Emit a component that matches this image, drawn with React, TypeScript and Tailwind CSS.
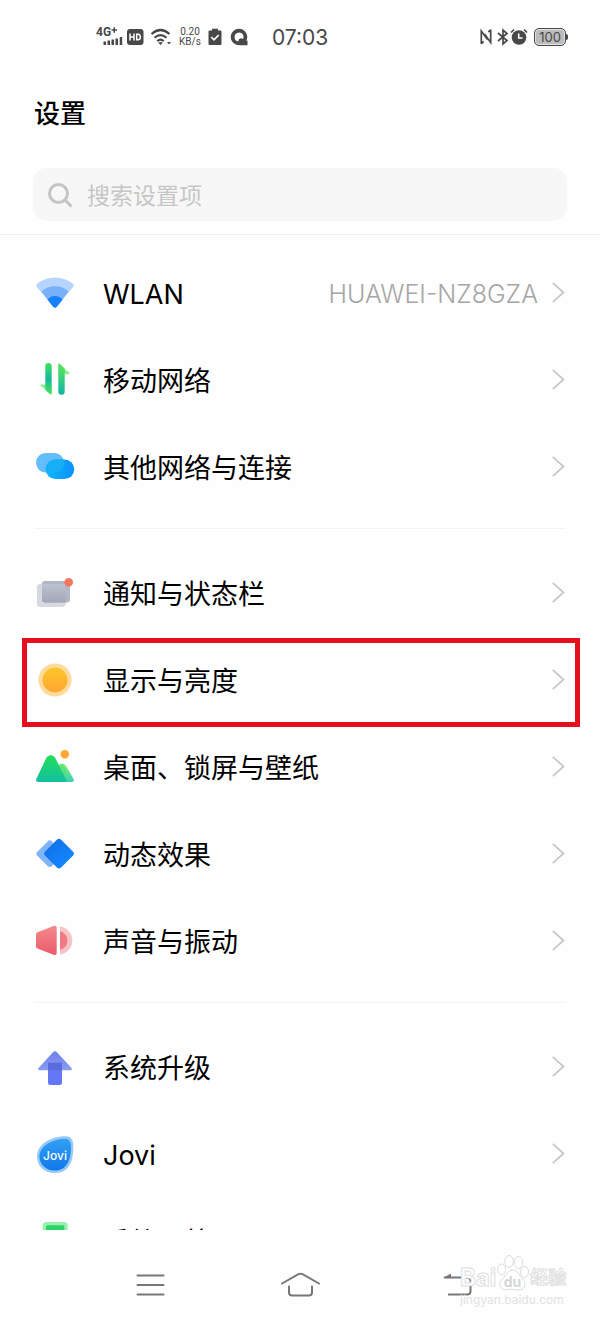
import React, { useState } from 'react';

const WlanIcon = () => (
  <svg viewBox="0 0 42 42" className="h-[42px] w-[42px] shrink-0" aria-hidden="true">
    <path d="M2.4 14.2Q1.6 13 2.8 12Q10.5 5.5 21 5.5Q31.5 5.5 39.2 12Q40.4 13 39.6 14.2L23 34.6Q21 36.8 19 34.6Z" fill="#b5d5fd" />
    <path d="M7.5 19.4Q13 14.2 21 14.2Q29 14.2 34.5 19.4L23 34.6Q21 36.8 19 34.6Z" fill="#79b0fa" />
    <path d="M13.4 27.4Q16.5 24 21 24Q25.5 24 28.6 27.4L23 34.6Q21 36.8 19 34.6Z" fill="#1780fb" />
  </svg>
);

const MobileIcon = () => (
  <svg viewBox="0 0 42 42" className="h-[42px] w-[42px] shrink-0" aria-hidden="true">
    <defs>
      <linearGradient id="mobile-down" x1="0" y1="0" x2="0" y2="1">
        <stop offset="0" stopColor="#3fe35c" />
        <stop offset=".5" stopColor="#14b8a0" />
        <stop offset="1" stopColor="#4be457" />
      </linearGradient>
      <linearGradient id="mobile-up" x1="0" y1="0" x2="0" y2="1">
        <stop offset="0" stopColor="#5be854" />
        <stop offset="1" stopColor="#12b3a6" />
      </linearGradient>
    </defs>
    <path d="M6.500 27Q5.600 25.400 7.500 25.400H17.700V35Z" fill="#8ff08c" />
    <path d="M11.300 7.200a3.200 3.200 0 0 1 6.400 0V34.500Q17.700 36.300 16.200 35.200L11.300 31Z" fill="url(#mobile-down)" />
    <path d="M35.500 13.500Q36.400 15.200 34.500 15.200H24.300V5.500Z" fill="#8ff08c" />
    <path d="M30.700 32.600a3.200 3.200 0 0 1-6.400 0V5.500Q24.300 3.700 25.800 4.800L30.700 9.500Z" fill="url(#mobile-up)" />
  </svg>
);

const ConnectionIcon = () => (
  <svg viewBox="0 0 42 42" className="h-[42px] w-[42px] shrink-0" aria-hidden="true">
    <defs>
      <linearGradient id="connection" x1="0" y1="0" x2="1" y2="0">
        <stop offset="0" stopColor="#10b9fb" />
        <stop offset="1" stopColor="#0b8fff" />
      </linearGradient>
    </defs>
    <rect x="2" y="7" width="28" height="19.500" rx="9.700" fill="#62bdf8" />
    <rect x="11.700" y="13.500" width="28.500" height="19.500" rx="9.700" fill="url(#connection)" />
    <path d="M11.700 23.200a9.700 9.700 0 0 1 9.700-9.700H29.500a9.700 9.700 0 0 1-9.200 13H12.300a9.700 9.700 0 0 1-.6-3.300Z" fill="#16aef5" />
  </svg>
);

const NotificationIcon = () => (
  <svg viewBox="0 0 42 42" className="h-[42px] w-[42px] shrink-0" aria-hidden="true">
    <defs>
      <linearGradient id="notification" x1="0" y1="0" x2="0" y2="1">
        <stop offset="0" stopColor="#bcc2d0" />
        <stop offset="1" stopColor="#a3a7b8" />
      </linearGradient>
    </defs>
    <rect x="3" y="12" width="28.500" height="23" rx="3" fill="#d6d9e0" />
    <rect x="8" y="9" width="28" height="21.500" rx="3" fill="#b3b6c4" />
    <path d="M8 12H31.500V30.500H11a3 3 0 0 1-3-3Z" fill="url(#notification)" />
    <circle cx="34.700" cy="10.200" r="4.300" fill="#f87560" />
  </svg>
);

const DisplayIcon = () => (
  <svg viewBox="0 0 42 42" className="h-[42px] w-[42px] shrink-0" aria-hidden="true">
    <defs>
      <linearGradient id="display" x1="0" y1="0" x2="0" y2="1">
        <stop offset="0" stopColor="#fec62c" />
        <stop offset="1" stopColor="#fea631" />
      </linearGradient>
    </defs>
    <circle cx="21" cy="21" r="16.600" fill="#fedb9a" />
    <circle cx="21" cy="21" r="12.500" fill="url(#display)" />
  </svg>
);

const WallpaperIcon = () => (
  <svg viewBox="0 0 42 42" className="h-[42px] w-[42px] shrink-0" aria-hidden="true">
    <defs>
      <linearGradient id="wallpaper-back" x1="0" y1="0" x2="0" y2="1">
        <stop offset="0" stopColor="#1fe05a" />
        <stop offset="1" stopColor="#14bfa0" />
      </linearGradient>
      <linearGradient id="wallpaper-front" x1="0" y1="0" x2="0" y2="1">
        <stop offset="0" stopColor="#8aef7c" />
        <stop offset="1" stopColor="#35cfb4" />
      </linearGradient>
    </defs>
    <path d="M20 36L25 19.800Q28.500 15.500 32 19.800L39.600 33Q40.700 36 37.500 36Z" fill="url(#wallpaper-front)" />
    <path d="M4.500 36Q1.200 36 2.300 33L12.500 11.500Q17 6.500 21 11.500L32.500 34Q33 36 31 36Z" fill="url(#wallpaper-back)" />
    <path d="M24.600 19Q26.500 17.300 28.500 17.600L32 24V33.200Z" fill="#4be06c" opacity=".6" />
    <circle cx="30.800" cy="8.300" r="4.200" fill="#fda72e" />
  </svg>
);

const MotionIcon = () => (
  <svg viewBox="0 0 42 42" className="h-[42px] w-[42px] shrink-0" aria-hidden="true">
    <defs>
      <linearGradient id="motion" x1="0" y1="0" x2="1" y2="0">
        <stop offset="0" stopColor="#1274ea" />
        <stop offset="1" stopColor="#1286ff" />
      </linearGradient>
    </defs>
    <rect x="5.500" y="10.500" width="20.500" height="20.500" rx="3" fill="#7fb4f8" transform="rotate(45 15.750 20.750)" />
    <rect x="13.700" y="9.400" width="22.600" height="22.600" rx="3" fill="url(#motion)" transform="rotate(45 25 20.700)" />
  </svg>
);

const SoundIcon = () => (
  <svg viewBox="0 0 42 42" className="h-[42px] w-[42px] shrink-0" aria-hidden="true">
    <defs>
      <linearGradient id="sound" x1="0" y1="0" x2="0" y2="1">
        <stop offset="0" stopColor="#f48a8d" />
        <stop offset="1" stopColor="#ea5a68" />
      </linearGradient>
    </defs>
    <path d="M2 14.500Q2 12.800 3.500 12.200L19.500 5.900Q22.700 5 22.700 7.500V33Q22.700 35.800 19.500 34.800L3.500 28.600Q2 28 2 26.300Z" fill="url(#sound)" />
    <path d="M26 6.600a14 14 0 0 1 0 27.800Z" fill="#f8c3c5" />
    <path d="M26 11.300a9.400 9.400 0 0 1 0 18.400Z" fill="#ee7b82" />
  </svg>
);

const UpgradeIcon = () => (
  <svg viewBox="0 0 42 42" className="h-[42px] w-[42px] shrink-0" aria-hidden="true">
    <defs>
      <linearGradient id="upgrade" x1="0" y1="0" x2="0" y2="1">
        <stop offset="0" stopColor="#6c7fe8" />
        <stop offset="1" stopColor="#8b9cf5" />
      </linearGradient>
    </defs>
    <path d="M19.300 5.900Q21 4.400 22.700 5.900L37.500 22Q38.600 24.200 36.200 24.200H5.800Q3.400 24.200 4.500 22Z" fill="url(#upgrade)" />
    <path d="M14 16.700H28V36.500a2.500 2.500 0 0 1-2.500 2.500H16.500a2.500 2.500 0 0 1-2.500-2.500Z" fill="#6478f6" />
    <path d="M14 16.700H28V24.200H14Z" fill="#5a6be0" />
  </svg>
);

const JoviIcon = () => (
  <svg viewBox="0 0 42 42" className="h-[42px] w-[42px] shrink-0" aria-hidden="true">
    <defs>
      <linearGradient id="jovi" x1="0" y1="0" x2="0" y2="1">
        <stop offset="0" stopColor="#35a0f5" />
        <stop offset="1" stopColor="#0e78ea" />
      </linearGradient>
    </defs>
    <path d="M32 3.300C37 3.300 39.300 7 39.300 13.500C39.300 29 35 40 20.500 40C10 40 3 33 3 23.500C3 10.500 18 3.300 32 3.300Z" fill="#95c9f7" />
    <path d="M31 5.800C35.500 5.800 37 9 37 14C37 28 32 37.600 20.500 37.600C11.500 37.600 5.400 31 5.400 23.500C5.400 12.500 19.500 5.800 31 5.800Z" fill="url(#jovi)" />
    <text x="21" y="27" textAnchor="middle" fontSize="12" fontWeight="500" fontFamily="Inter, sans-serif" fill="#fff">Jovi</text>
  </svg>
);

const NavigationIcon = () => (
  <svg viewBox="0 0 42 42" className="h-[42px] w-[42px] shrink-0" aria-hidden="true">
    <rect x="8.700" y="2" width="25" height="37" rx="3.500" fill="#9aeeb0" />
    <rect x="12" y="5.300" width="18.400" height="30.400" rx="1.500" fill="#2bd465" />
  </svg>
);

const Chevron = () => (
  <svg viewBox="0 0 14 22" className="h-[22px] w-[14px] shrink-0" fill="none" stroke="#c6c6c6" strokeWidth="1.700" aria-hidden="true">
    <path d="M.8 .8L11.500 10.500L.8 20.200" />
  </svg>
);

type Item = {
  label: string;
  Icon: () => React.ReactElement;
  value?: string;
  marked?: boolean;
};

const groups: Item[][] = [
  [
    { label: 'WLAN', Icon: WlanIcon, value: 'HUAWEI-NZ8GZA' },
    { label: '移动网络', Icon: MobileIcon },
    { label: '其他网络与连接', Icon: ConnectionIcon },
  ],
  [
    { label: '通知与状态栏', Icon: NotificationIcon },
    { label: '显示与亮度', Icon: DisplayIcon, marked: true },
    { label: '桌面、锁屏与壁纸', Icon: WallpaperIcon },
    { label: '动态效果', Icon: MotionIcon },
    { label: '声音与振动', Icon: SoundIcon },
  ],
  [
    { label: '系统升级', Icon: UpgradeIcon },
    { label: 'Jovi', Icon: JoviIcon },
    { label: '系统导航', Icon: NavigationIcon },
  ],
];

const SettingRow = ({ label, Icon, value, marked }: Item) => (
  <li className="relative">
    <a href="#" className="flex h-[87px] items-center">
      <Icon />
      <span className="ml-[27px] pt-1 text-[27px] leading-9 text-black">{label}</span>
      <span className="ml-auto mr-3.5 pt-0.5 text-[25px] leading-9 font-light text-[#a6a6a6]">{value}</span>
      <Chevron />
    </a>
    {marked && (
      <span className="pointer-events-none absolute -bottom-1 -left-3 -right-3.5 top-0.5 border-5 border-[#e60f1e]" />
    )}
  </li>
);

const StatusBar = () => (
  <div className="flex h-[74px] items-center pl-24 pr-8 text-[#484848]">
    {/* signal */}
    <svg viewBox="0 0 28 22" className="h-[22px] w-7" fill="currentColor" aria-hidden="true">
      <text x="0" y="10" fontSize="12" fontWeight="700" fontFamily="Roboto, sans-serif">4G</text>
      <path d="M15.500 4H21M18.250 1.300V6.700" stroke="currentColor" strokeWidth="1.500" />
      <path d="M7.500 15.500h2.500V19H7.500zM11.500 14.500H14V19H11.500zM15.500 13.500H18V19H15.500zM19.500 12.500H22V19H19.500zM23.700 11H26.200V19H23.700z" />
    </svg>
    <svg viewBox="0 0 18 18" className="ml-0.5 h-[18px] w-[18px]" aria-hidden="true">
      <rect x="1" y="1" width="16.500" height="16" rx="3" fill="currentColor" />
      <path d="M4 5.500V12.500M8 5.500V12.500M4 9H8M10.700 6.200V11.800H12.200Q14.300 11.800 14.300 9Q14.300 6.200 12.200 6.200Z" fill="none" stroke="#fff" strokeWidth="1.500" />
    </svg>
    <svg viewBox="0 0 24 18" className="ml-1.5 h-[18px] w-6" fill="none" stroke="currentColor" strokeWidth="2.200" aria-hidden="true">
      <path d="M1.500 6Q10.500-2 19.500 6M4.500 9.800Q10.500 4.400 16.500 9.800M7.300 13.200Q10.500 10.200 13.700 13.200" />
      <path d="M8.300 14.700Q10.500 13.400 12.700 14.700L10.500 17Z" fill="currentColor" stroke="none" />
      <path d="M17 14H21L19 16.500Z" fill="currentColor" stroke="none" />
    </svg>
    <span className="ml-1 w-6 text-center font-['Roboto'] text-[10px] leading-[10px]">0.20 KB/s</span>
    <svg viewBox="0 0 14 18" className="ml-1.5 h-[18px] w-3.5" aria-hidden="true">
      <path d="M1.500 2.500H4V.8H10V2.500H12.500Q13.500 2.500 13.500 3.500V16Q13.500 17 12.500 17H1.500Q.5 17 .5 16V3.500Q.5 2.500 1.500 2.500Z" fill="currentColor" />
      <path d="M3.300 9L6 11.800L10.700 7" fill="none" stroke="#fff" strokeWidth="1.700" />
    </svg>
    <svg viewBox="0 0 18 18" className="ml-2 h-[18px] w-[18px]" aria-hidden="true">
      <path d="M9 .7A8.300 8.300 0 1 1 9 17.300A8.300 8.300 0 1 1 9 .7Z" fill="currentColor" />
      <path d="M9.300 4.500Q13.500 4.800 13.500 9Q13.500 10 13 11Q11.200 9.600 9 11.300Q8 12.500 8.700 13.500Q4.500 13 4.500 9Q4.700 4.800 9.300 4.500Z" fill="#fff" />
      <path d="M12 13.500L17.500 12.500V17.200H10Z" fill="currentColor" />
    </svg>
    <time className="ml-6 pt-0.5 text-[21px] leading-6">07:03</time>

    <svg viewBox="0 0 12 18" className="ml-auto h-[18px] w-3" fill="none" stroke="currentColor" strokeWidth="1.700" aria-hidden="true">
      <path d="M1.300 16V3L7.500 11.500M10.700 1.500V14.500L4.500 6M1.300 15.500L3.700 13.500M10.700 2L8.300 4" />
    </svg>
    <svg viewBox="0 0 14 18" className="ml-1 h-[18px] w-3.5" fill="none" stroke="currentColor" strokeWidth="1.700" aria-hidden="true">
      <path d="M2 5L11 12.500L7 16V2L11 5.500L2 13" />
    </svg>
    <svg viewBox="0 0 18 18" className="h-[18px] w-[18px]" fill="none" aria-hidden="true">
      <circle cx="9" cy="9.500" r="7.300" fill="currentColor" />
      <path d="M1 4.500L4 1.500M17 4.500L14 1.500" stroke="currentColor" strokeWidth="1.700" />
      <path d="M8.700 5.500V10H12.500" stroke="#fff" strokeWidth="1.600" />
    </svg>
    <span className="ml-1.5 flex h-[18px] w-8 items-center justify-center rounded-[5px] border border-[#484848] bg-[#bcbcbc] text-[13px] leading-4 ring-1 ring-inset ring-[#e4e4e4]">
      100
    </span>
    <span className="h-1.5 w-0.5 rounded-r-sm bg-[#484848]" />
  </div>
);

const Watermark = () => (
  <div className="pointer-events-none absolute bottom-3 right-8 flex w-[108px] flex-col" aria-hidden="true">
    <div className="flex h-[42px] items-end">
      <span className="text-2xl leading-7 font-bold text-white [-webkit-text-stroke:1px_#dedede]">Bai</span>
      <svg viewBox="0 0 34 38" className="h-[38px] w-[34px] shrink-0" fill="#fff" stroke="#dcdcdc">
        <ellipse cx="5.500" cy="15.500" rx="4" ry="5.500" />
        <ellipse cx="13" cy="7.500" rx="4.200" ry="6" />
        <ellipse cx="22.500" cy="8.500" rx="4.200" ry="6" />
        <ellipse cx="28.500" cy="18" rx="4" ry="5.500" />
        <path d="M17 16C22 16 23 22 27 25C31 29 29 36 23 36C19 36 16 34.500 12 35.500C5 37 2 31 5 27C9 23 11 16 17 16Z" />
        <text x="16.500" y="33" textAnchor="middle" fontSize="14" fontWeight="700" fontFamily="Inter, sans-serif" fill="#d6d6d6" stroke="none">du</text>
      </svg>
      <span className="shrink-0 text-lg leading-7 font-bold text-white [-webkit-text-stroke:1px_#dedede]">经验</span>
    </div>
    <span className="text-[12px] leading-4 text-[#e2e2e2]">jingyan.baidu.com</span>
  </div>
);

const App = () => {
  const [query, setQuery] = useState('');

  return (
    <div className="relative flex h-screen flex-col bg-[#fefefe] font-['Inter','Noto_Sans_CJK_SC',sans-serif]">
      <header className="shrink-0 border-b border-[#efefef] pb-[13px]">
        <StatusBar />
        <h1 className="px-[34px] pt-[22px] text-[26px] leading-9 font-medium text-black">设置</h1>
        <label className="mx-[33px] mt-9 flex h-[53px] items-center rounded-[14px] bg-[#f7f7f7] px-3.5">
          <svg viewBox="0 0 26 26" className="h-[26px] w-[26px] shrink-0" fill="none" stroke="#c4c4c4" strokeWidth="3" aria-hidden="true">
            <circle cx="11.500" cy="11.500" r="9" />
            <path d="M18 18L24.500 24.500" />
          </svg>
          <input
            type="search"
            aria-label="搜索设置项"
            placeholder="搜索设置项"
            value={query}
            onChange={(e) => setQuery(e.target.value)}
            className="ml-3.5 min-w-0 flex-1 bg-transparent pt-0.5 text-[23px] leading-8 text-black outline-none placeholder:text-[#c6c6c6]"
          />
        </label>
      </header>

      <main className="min-h-0 flex-1 overflow-hidden px-[34px] pt-3.5">
        {groups.map((items, index) => (
          <ul
            key={index}
            className="border-t border-[#f3f3f3] pb-[18px] pt-5 first:border-t-0 first:pt-0"
          >
            {items.map((item) => (
              <SettingRow key={item.label} {...item} />
            ))}
          </ul>
        ))}
      </main>

      <nav className="grid h-[90px] shrink-0 grid-cols-3 items-center justify-items-center px-[12.5%] pt-5">
        <button type="button" aria-label="最近任务" className="h-[70px]">
          <svg viewBox="0 0 44 30" className="h-[30px] w-11" fill="none" stroke="#777" strokeWidth="2" strokeLinecap="round">
            <path d="M9.500 5.500H35.500M9.500 15H35.500M9.500 24.500H35.500" />
          </svg>
        </button>
        <button type="button" aria-label="主屏幕" className="h-[70px]">
          <svg viewBox="0 0 44 30" className="h-[30px] w-11" fill="none" stroke="#777" strokeWidth="2" strokeLinecap="round">
            <path d="M4 13.500L20.500 4.200Q22.500 3.200 24.500 4.200L41 13.500M11 16.500V22.500Q11 25.500 14 25.500H31Q34 25.500 34 22.500V16.500" />
          </svg>
        </button>
        <button type="button" aria-label="返回" className="h-[70px]">
          <svg viewBox="0 0 44 30" className="h-[30px] w-11" fill="none" stroke="#777" strokeWidth="2">
            <path d="M16 7.500H38.500Q42.500 7.500 42.500 11V21Q42.500 24.500 39 24.500H20" />
            <path d="M15 8L23 3.500V8Z" fill="#777" stroke="none" />
          </svg>
        </button>
      </nav>
      <Watermark />
    </div>
  );
};

export default App;
